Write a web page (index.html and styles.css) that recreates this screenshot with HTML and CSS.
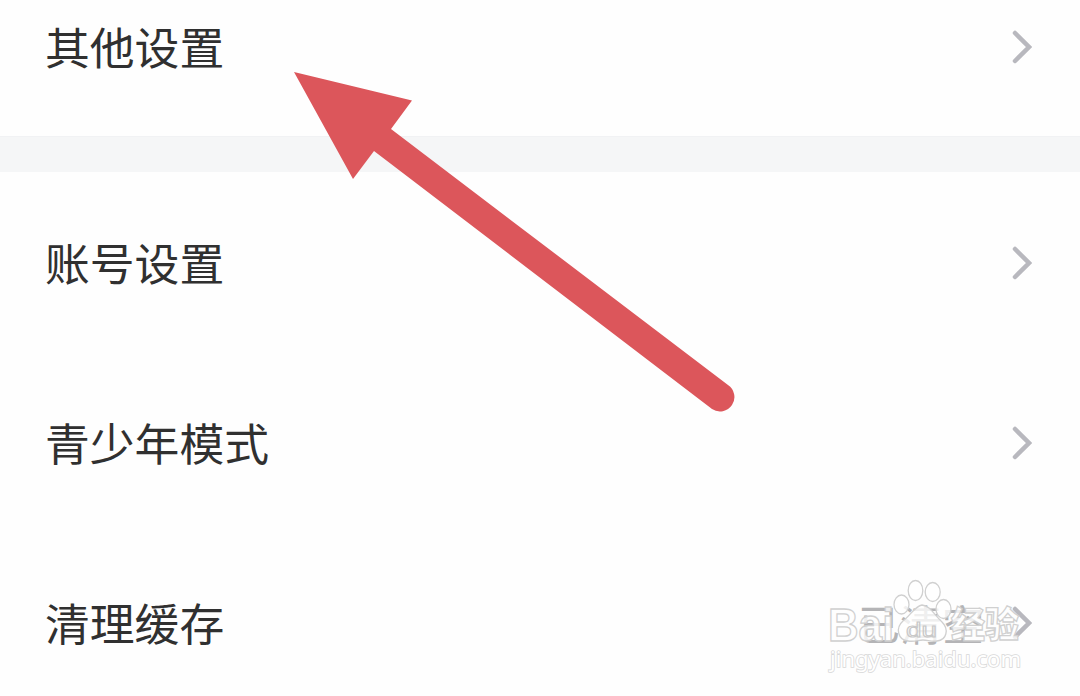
FILE: index.html
```html
<!DOCTYPE html>
<html lang="zh-CN">
<head>
<meta charset="utf-8">
<title>设置</title>
<link rel="stylesheet" href="styles.css">
</head>
<body>
<main class="screen">
  <section class="group group-top">
    <div class="row"><span class="label">其他设置</span><svg class="chevron" viewBox="0 0 20 34"><path d="M3 3 17 17 3 31"/></svg></div>
  </section>
  <div class="divider"></div>
  <section class="group">
    <div class="row"><span class="label">账号设置</span><svg class="chevron" viewBox="0 0 20 34"><path d="M3 3 17 17 3 31"/></svg></div>
    <div class="row"><span class="label">青少年模式</span><svg class="chevron" viewBox="0 0 20 34"><path d="M3 3 17 17 3 31"/></svg></div>
    <div class="row"><span class="label">清理缓存</span><span class="value">已清空</span><svg class="chevron" viewBox="0 0 20 34"><path d="M3 3 17 17 3 31"/></svg></div>
  </section>
  <svg class="arrow" viewBox="0 0 442 342">
    <path d="M0 0 118 28.500 97 57 434 313A13.5 13.5 0 0 1 418 337L80 79 59 107Z"/>
  </svg>
  <svg class="watermark" viewBox="0 0 220 110">
    <g class="mark">
      <text class="brand" x="3" y="66" textLength="66" lengthAdjust="spacingAndGlyphs">Bai</text>
      <text class="brand-cn" x="126" y="63" textLength="68" lengthAdjust="spacingAndGlyphs">经验</text>
      <ellipse cx="76.500" cy="29.500" rx="7.500" ry="9.500"/>
      <ellipse cx="90.500" cy="15.500" rx="7.300" ry="10"/>
      <ellipse cx="107.700" cy="17" rx="7.500" ry="9.500"/>
      <ellipse cx="118.500" cy="34" rx="7.500" ry="9.500"/>
      <path d="M97 30C90 31 85 41 78 46C70 53 73 65 83 66C90 67 93 65 98 65C103 65 106 67 112 66C122 65 124 54 117 47C109 40 106 31 97 30Z"/>
    </g>
    <text class="paw-text" x="81" y="62" textLength="31" lengthAdjust="spacingAndGlyphs">du</text>
    <text class="url" x="5" y="92" textLength="191" lengthAdjust="spacingAndGlyphs">jingyan.baidu.com</text>
  </svg>
</main>
</body>
</html>
```
FILE: styles.css
```css
body {
  margin: 0;
  background: #fefefe;
  font-family: "Noto Sans CJK SC", sans-serif;
}
.screen {
  position: relative;
  width: 1080px;
  height: 696px;
  overflow: hidden;
}
.group-top {
  height: 136px;
  display: flex;
  flex-direction: column;
  justify-content: flex-end;
}
.group-top .row {
  margin-bottom: -1px;
  flex-shrink: 0;
}
.row {
  box-sizing: border-box;
  height: 180px;
  padding: 0 48px 0 45px;
  display: flex;
  align-items: center;
}
.divider {
  box-sizing: border-box;
  height: 36px;
  margin-bottom: 1px;
  background: #f5f6f7;
  border-top: 1px solid #f1f2f4;
}
.label {
  flex: 1;
  padding-bottom: 3px;
  font-size: 44.8px;
  line-height: 60px;
  color: #303030;
}
.value {
  padding-bottom: 1px;
  font-size: 42px;
  line-height: 60px;
  margin-right: 28px;
  color: #b4b4b6;
}
.chevron {
  width: 20px;
  height: 34px;
  fill: none;
  stroke: #b8b8be;
  stroke-width: 4.5;
  stroke-linecap: round;
}
.arrow {
  position: absolute;
  left: 294px;
  top: 72px;
  width: 442px;
  height: 342px;
  fill: #dc565b;
}
.watermark {
  position: absolute;
  left: 825px;
  top: 575px;
  width: 220px;
  height: 110px;
}
.mark {
  fill: rgba(255, 255, 255, 0.78);
  stroke: #d0d0d0;
  stroke-width: 1.3;
}
.brand {
  font: bold 46px "Liberation Sans", sans-serif;
}
.brand-cn {
  font: 900 36px "Noto Sans CJK SC", sans-serif;
}
.paw-text {
  font: 21px "Liberation Sans", sans-serif;
  fill: none;
  stroke: #c8c8c8;
}
.url {
  font: 22px "Noto Sans", sans-serif;
  fill: #fff;
  stroke: #d8d8d8;
  stroke-width: 1.6;
  paint-order: stroke;
}
```
